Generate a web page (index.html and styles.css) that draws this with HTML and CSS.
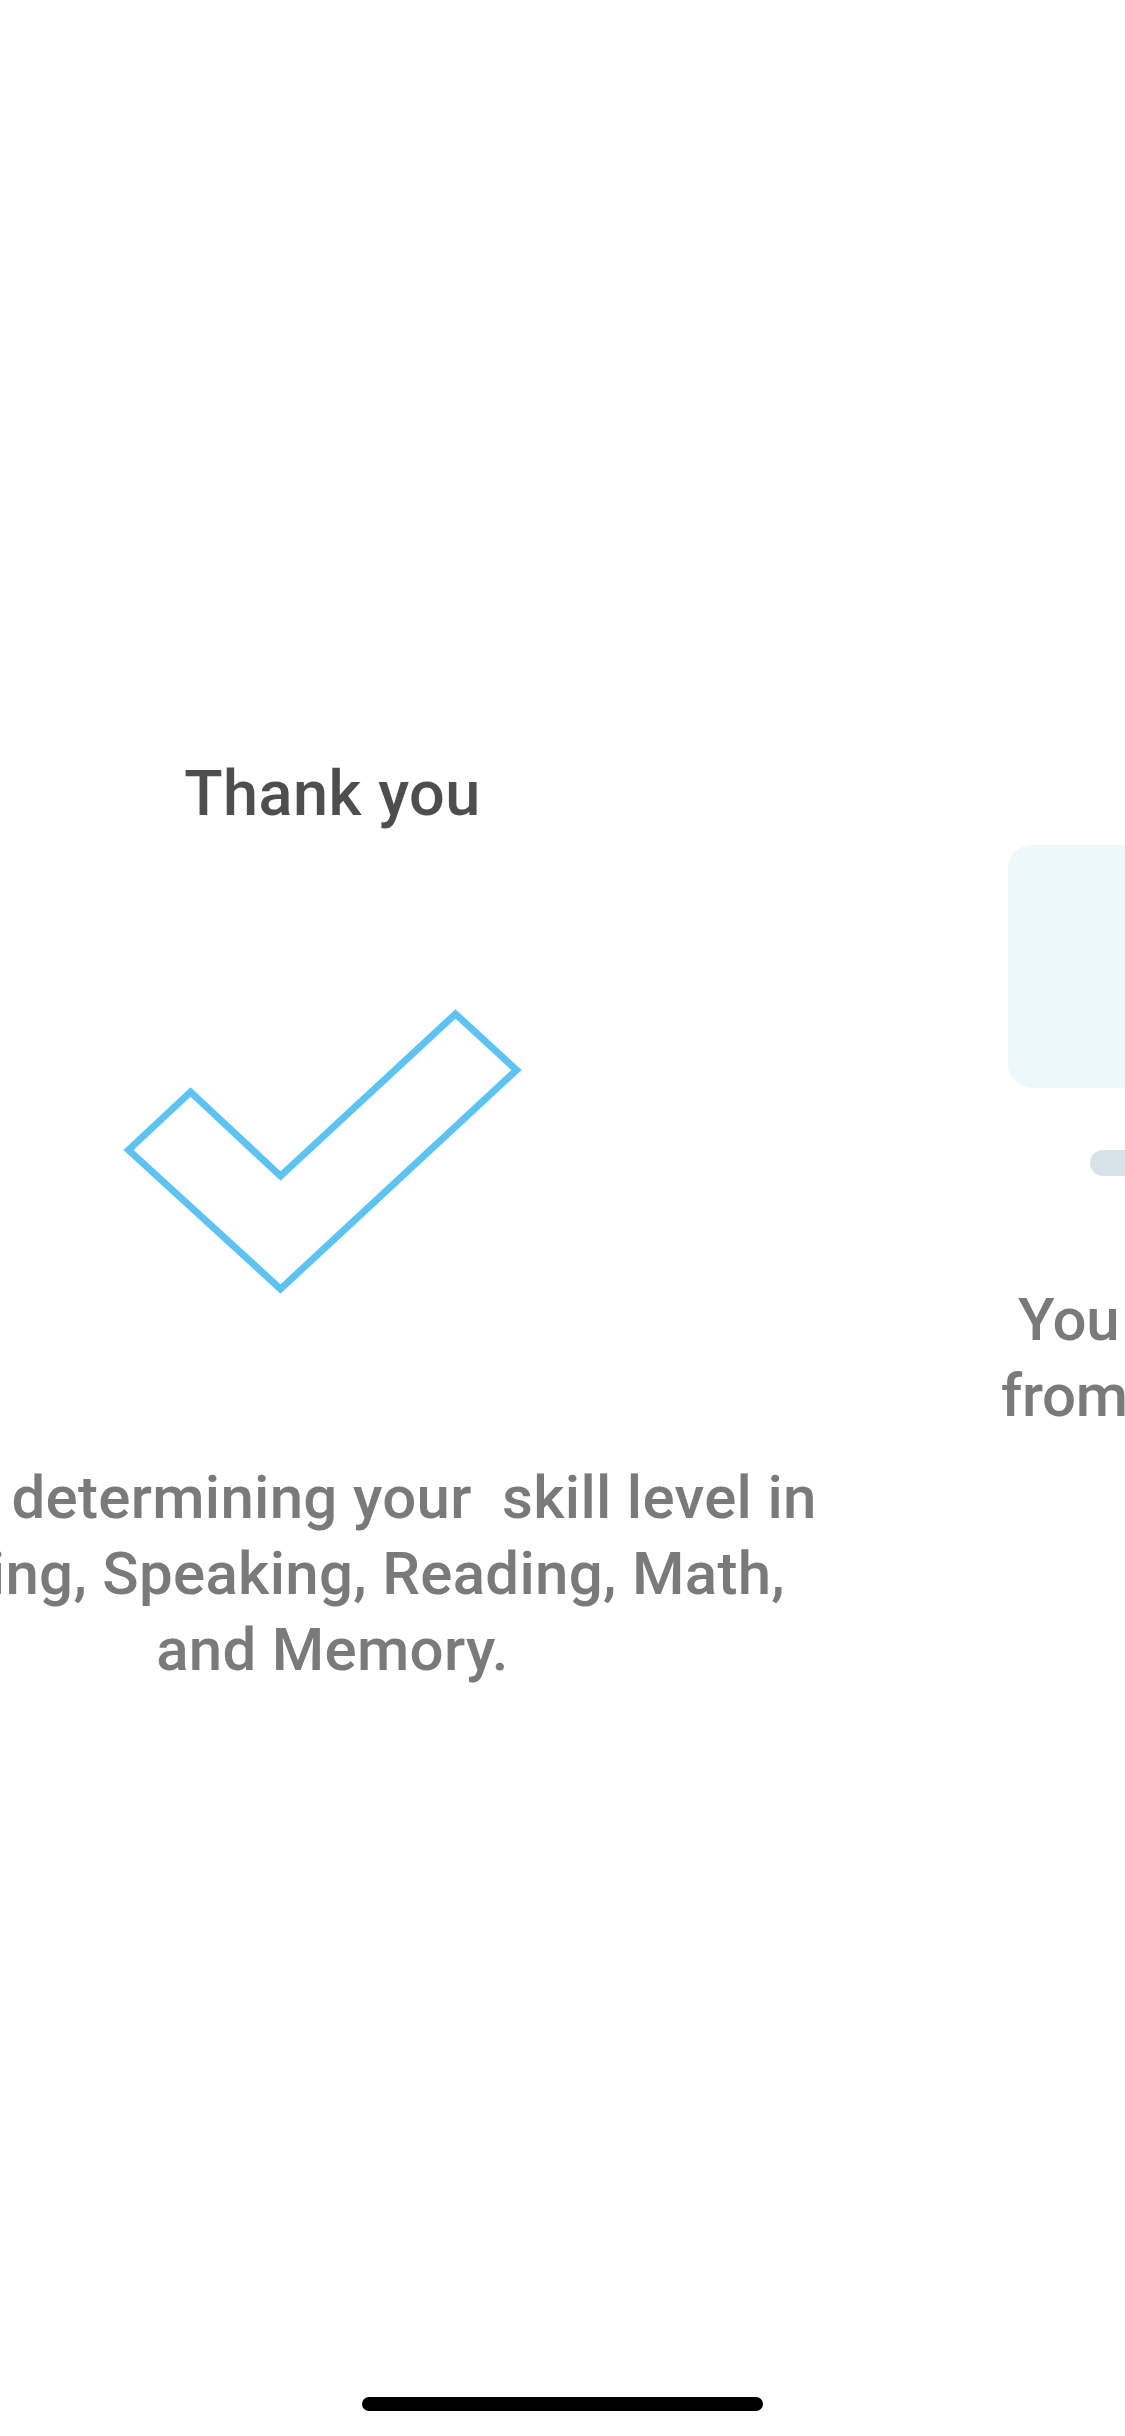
FILE: index.html
```html
<!DOCTYPE html>
<html lang="en">
<head>
<meta charset="utf-8">
<title>Thank you</title>
<link rel="stylesheet" href="styles.css">
</head>
<body>
<div class="screen">
  <div class="track">
    <section class="slide slide-done">
      <h1 class="title">Thank you</h1>
      <svg class="check" viewBox="102.5 990 460 320" width="460" height="320" aria-hidden="true">
        <polygon points="128,1150 190,1092 280,1176 455,1014 516,1070 280,1289" fill="none" stroke="#5bc4f5" stroke-width="7" stroke-linejoin="miter"/>
      </svg>
      <p class="body">We're determining your&nbsp; skill level in<br>Writing, Speaking, Reading, Math,<br>and Memory.</p>
    </section>
    <section class="slide slide-next">
      <div class="card"></div>
      <div class="pill"></div>
      <p class="body">You will receive personalized tips<br>from our experts based on results.</p>
    </section>
  </div>
  <div class="home-indicator"></div>
</div>
</body>
</html>
```
FILE: styles.css
```css
html, body {
  margin: 0;
  padding: 0;
  background: #ffffff;
}
.screen {
  position: relative;
  width: 1125px;
  height: 2436px;
  overflow: hidden;
  background: #ffffff;
  font-family: Roboto, "Noto Sans", "Liberation Sans", sans-serif;
}
.track {
  display: flex;
  margin-left: -230px;
}
.slide {
  flex: 0 0 1125px;
  width: 1125px;
  display: flex;
  flex-direction: column;
  align-items: center;
}
.slide-done {
  padding-top: 762px;
}
.slide-next {
  padding-top: 845px;
}
.title {
  margin: 0;
  font-size: 63px;
  line-height: 63px;
  font-weight: 500;
  color: #4e4e4e;
  letter-spacing: 0.5px;
}
.check {
  display: block;
  margin-top: 165px;
}
.body {
  margin: 150px 0 0;
  font-size: 60px;
  line-height: 76px;
  font-weight: 500;
  color: #7a7a7a;
  text-align: center;
  letter-spacing: 0.3px;
}
.card {
  width: 900px;
  height: 243px;
  border-radius: 24px;
  background: #edf8fd;
}
.pill {
  margin-top: 62px;
  width: 735px;
  height: 26px;
  border-radius: 13px;
  background: #d7e3e9;
}
.slide-next .body {
  margin-top: 106px;
  letter-spacing: -0.3px;
}
.home-indicator {
  position: absolute;
  left: 362px;
  top: 2397px;
  width: 401px;
  height: 14px;
  border-radius: 7px;
  background: #000000;
}
```
